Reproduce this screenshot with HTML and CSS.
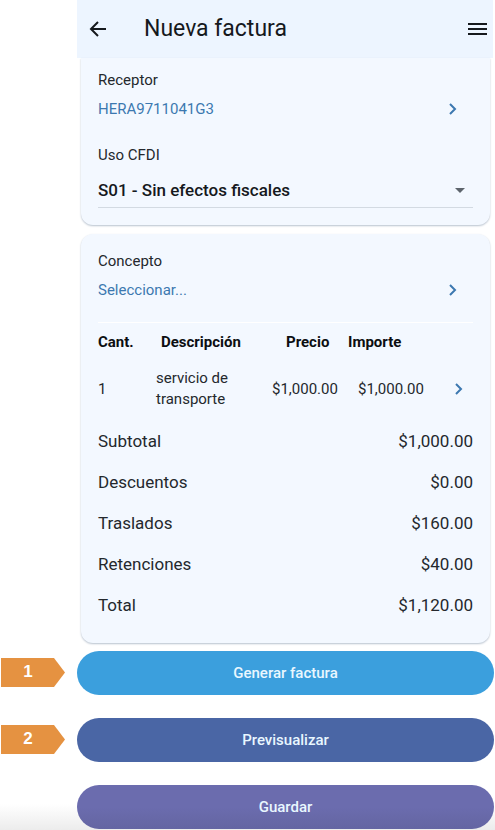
FILE: index.html
```html
<!DOCTYPE html>
<html lang="es">
<head>
    <meta charset="utf-8">
    <meta name="viewport" content="width=device-width, initial-scale=1">
    <title>Nueva factura</title>
    <link rel="stylesheet" href="styles.css">
</head>
<body>
    <div class="screen">
        <header class="topbar">
            <button class="icon-btn" type="button" aria-label="Regresar">
                <svg width="18" height="18" viewBox="0 0 18 18"><path d="M9 2L2 9l7 7M2 9h15" fill="none" stroke="currentColor" stroke-width="2"/></svg>
            </button>
            <h1>Nueva factura</h1>
            <button class="icon-btn" type="button" aria-label="Menú">
                <svg width="20" height="14" viewBox="0 0 20 14"><path d="M0 2h19M0 7h19M0 12h19" fill="none" stroke="currentColor" stroke-width="2"/></svg>
            </button>
        </header>

        <section class="card card-top">
            <h2 class="label">Receptor</h2>
            <a class="picker" href="#">HERA9711041G3
                <svg class="chevron" width="8" height="12" viewBox="0 0 8 12"><path d="M1 1l5 5-5 5"/></svg>
            </a>
            <label class="label" for="uso">Uso CFDI</label>
            <div class="select-wrap">
                <select id="uso">
                    <option>S01 - Sin efectos fiscales</option>
                </select>
            </div>
        </section>

        <section class="card">
            <h2 class="label">Concepto</h2>
            <a class="picker" href="#">Seleccionar...
                <svg class="chevron" width="8" height="12" viewBox="0 0 8 12"><path d="M1 1l5 5-5 5"/></svg>
            </a>
            <table class="items">
                <thead>
                    <tr>
                        <th class="col-qty">Cant.</th>
                        <th class="col-desc">Descripción</th>
                        <th class="col-price">Precio</th>
                        <th class="col-amount">Importe</th>
                        <td class="col-go"></td>
                    </tr>
                </thead>
                <tbody>
                    <tr>
                        <td>1</td>
                        <td>servicio de transporte</td>
                        <td class="price">$1,000.00</td>
                        <td class="amount">$1,000.00</td>
                        <td class="col-go">
                            <a href="#" aria-label="Ver concepto"><svg class="chevron" width="8" height="12" viewBox="0 0 8 12"><path d="M1 1l5 5-5 5"/></svg></a>
                        </td>
                    </tr>
                </tbody>
            </table>
            <dl class="totals">
                <div><dt>Subtotal</dt><dd>$1,000.00</dd></div>
                <div><dt>Descuentos</dt><dd>$0.00</dd></div>
                <div><dt>Traslados</dt><dd>$160.00</dd></div>
                <div><dt>Retenciones</dt><dd>$40.00</dd></div>
                <div><dt>Total</dt><dd>$1,120.00</dd></div>
            </dl>
        </section>
    </div>

    <div class="actions">
        <span class="tag">1</span>
        <button class="btn btn-generate" type="button">Generar factura</button>
        <span class="tag">2</span>
        <button class="btn btn-preview" type="button">Previsualizar</button>
        <button class="btn btn-save" type="button">Guardar</button>
    </div>
</body>
</html>
```

FILE: styles.css
```css
* { box-sizing: border-box; }
body { margin: 0; background: #fff; color: #24282d; font-family: Roboto, "Liberation Sans", sans-serif; font-size: 15px; line-height: 20px; }
h1, h2, dl, dd { margin: 0; font-weight: 400; }
button { border: 0; font-family: inherit; cursor: pointer; }
a { color: #3c78b0; text-decoration: none; }

.screen { margin: 0 2px 0 77px; }
.topbar { display: flex; align-items: center; height: 58px; padding: 0 5px 0 12px; background: #edf5ff; color: #16191d; }
.topbar h1 { flex: 1; margin-left: 37px; font-size: 23px; line-height: 28px; }
.icon-btn { display: flex; padding: 0; background: none; color: #16191d; }

.card { margin: 0 3px 8px 4px; padding: 17px; background: #f3f8ff; border-radius: 12px; box-shadow: 0 1px 2px #b8c2ce; }
.card-top { margin-bottom: 9px; padding: 12px 17px 17px; border-radius: 0 0 12px 12px; }
.label { display: block; font-size: 15px; line-height: 20px; }
.picker { display: flex; align-items: center; justify-content: space-between; padding: 9px 16px 8px 0; }
.chevron { display: block; fill: none; stroke: #3c78b0; stroke-width: 2; }

.card-top .picker { margin-bottom: 18px; }
.select-wrap { position: relative; margin-top: 7px; border-bottom: 1px solid #d3dae2; }
.select-wrap::after { content: ""; position: absolute; top: 16px; right: 8px; border: 5px solid transparent; border-top-color: #5d646c; border-bottom: 0; pointer-events: none; }
select { display: block; width: 100%; height: 35px; padding: 0; border: 0; background: none; color: #16191d; font: 500 17px/24px Roboto, "Liberation Sans", sans-serif; appearance: none; }

.items { width: 100%; margin-top: 14px; border-top: 1px solid #fff; border-collapse: collapse; table-layout: fixed; }
.items th, .items td { padding: 0; text-align: left; }
.items th { height: 38px; color: #0c0e11; font-weight: 700; }
.items tbody td { height: 57px; line-height: 21px; }
.items .col-qty { width: 58px; }
.items .col-desc { padding-left: 5px; }
.items .col-price { width: 80px; padding-left: 18px; }
.items .price { padding-left: 4px; }
.items .col-amount { width: 107px; }
.items .amount { padding-left: 10px; }
.items .col-go { width: 18px; }

.totals { margin-top: 3px; font-size: 17px; line-height: 41px; }
.totals div { display: flex; justify-content: space-between; }

.actions { display: grid; grid-template-columns: 65px 1fr; gap: 23px 12px; align-items: center; padding: 0 1px 1px 0; background: linear-gradient(#fff, #ececec) bottom / 100% 26px no-repeat; }
.tag { justify-self: end; width: 64px; height: 29px; padding-right: 10px; background: #e59241; clip-path: polygon(0 0, 53px 0, 100% 50%, 53px 100%, 0 100%); color: #fff; font: 700 17px/27px "Liberation Sans", sans-serif; text-align: center; }
.btn { grid-column: 2; height: 44px; border-radius: 22px; color: #e9f7ff; font-size: 15px; font-weight: 500; }
.btn-generate { background: #3b9fdd; }
.btn-preview { background: #4a66a5; }
.btn-save { background: linear-gradient(#6b6cae 50%, #6465a2); }
```
